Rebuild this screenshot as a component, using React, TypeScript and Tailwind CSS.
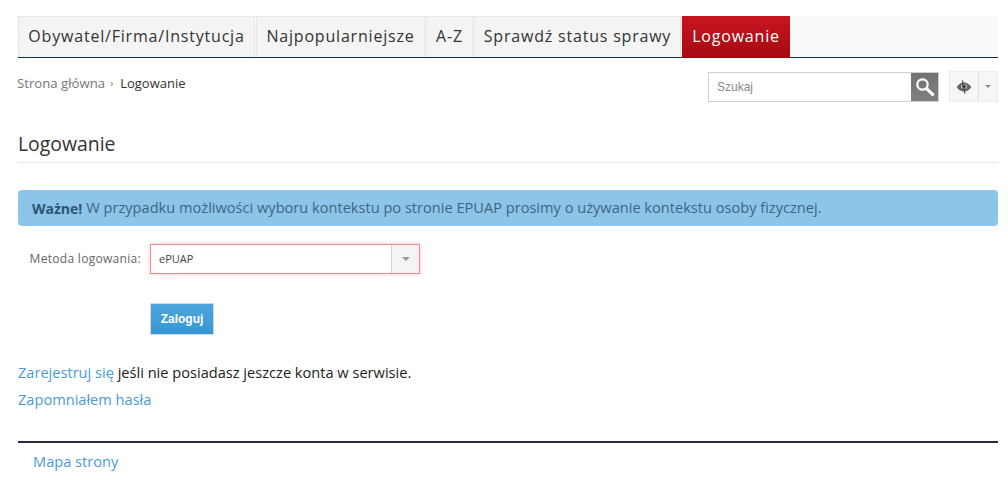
const tabs = [
  { label: "Obywatel/Firma/Instytucja", width: "w-[237px]" },
  { label: "Najpopularniejsze", width: "w-[169px]" },
  { label: "A-Z", width: "w-[47px]" },
  { label: "Sprawdź status sprawy", width: "w-[207px]" },
];

export default function App() {
  return (
    <div className="min-h-[486px] bg-white pt-4 pr-[10px] pl-[18px] font-['Open_Sans',sans-serif] text-[14.6px] text-[#333]">
      <nav className="flex h-[42px] items-stretch border-b border-[#16304f] bg-[#f9f9f9]">
        {tabs.map((tab) => (
          <a
            key={tab.label}
            className={`${tab.width} mr-px flex items-center justify-center border-x border-t border-[#e6e6e6] bg-[#f4f4f4] pb-[2px] text-[16px] tracking-[0.8px] whitespace-nowrap text-[#333]`}
          >
            {tab.label}
          </a>
        ))}
        <a className="-mb-px flex w-[108px] items-center justify-center bg-gradient-to-b from-[#c8141f] to-[#a50b12] pb-[2px] text-[16px] tracking-[0.8px] text-white">
          Logowanie
        </a>
      </nav>

      <div className="flex items-start justify-between pt-[13px]">
        <div className="-ml-px flex items-center pt-[2px] text-[13.2px] leading-[20px]">
          <span className="text-[#777]">Strona główna</span>
          <span className="mr-[7px] ml-[5px] text-[10px] text-[#777]">›</span>
          <span className="text-[13px] text-[#333]">Logowanie</span>
        </div>
        <div className="flex items-start">
          <div className="mt-px flex h-[30px] w-[231px] border border-[#cfcfcf] bg-white">
            <span className="flex flex-1 items-center pl-2 font-['Liberation_Sans',sans-serif] text-[12px] text-[#8a8a8a]">Szukaj</span>
            <span className="flex w-[27px] items-center justify-center bg-gradient-to-b from-[#727272] to-[#808080]">
              <svg width="20" height="20" viewBox="0 0 20 20" fill="none" stroke="white">
                <circle cx="7.5" cy="7.5" r="5.2" strokeWidth="2.2" />
                <path d="M11.6 11.6L17.6 17.4" strokeWidth="3.2" strokeLinecap="round" />
              </svg>
            </span>
          </div>
          <div className="ml-[10px] flex h-[31px] w-[49px] border border-[#ececec] bg-[#f6f6f6]">
            <span className="flex w-[29px] items-center justify-center border-r border-[#e4e4e4]">
              <svg width="16" height="14" viewBox="0 0 16 14">
                <path d="M0.5 7C3 3.6 5.4 2.4 8 2.4S13 3.6 15.5 7C13 10.4 10.6 11.6 8 11.6S3 10.4 0.5 7Z" fill="#666" />
                <ellipse cx="8" cy="6.5" rx="3" ry="2.2" fill="#bbb" />
                <circle cx="8" cy="6.5" r="1.7" fill="#333" />
                <path d="M6.4 0.5L8.8 13.5" stroke="#444" strokeWidth="1.2" />
              </svg>
            </span>
            <span className="flex flex-1 items-center justify-center">
              <span className="h-0 w-0 border-x-[3px] border-t-[3px] border-x-transparent border-t-[#888]" />
            </span>
          </div>
        </div>
      </div>

      <h1 className="mt-[28px] border-b border-[#e5e5e5] pb-[4px] text-[19.4px] leading-[28px] text-[#333]">Logowanie</h1>

      <div className="mt-[27px] flex h-[36px] items-center rounded-[4px] bg-[#8cc5e8] pl-[14px] text-[#3f6582]">
        <strong className="mr-1 text-[14px] font-bold text-[#2b5673]">Ważne!</strong>
        W przypadku możliwości wyboru kontekstu po stronie EPUAP prosimy o używanie kontekstu osoby fizycznej.
      </div>

      <div className="mt-[18px] flex items-center">
        <label className="w-[132px] pr-[9px] text-right text-[12px] tracking-[0.3px] text-[#666]">Metoda logowania:</label>
        <div className="flex h-[30px] w-[270px] border border-[#f08a90] bg-white shadow-[0_0_4px_rgba(240,120,130,0.45)]">
          <span className="flex flex-1 items-center pl-2 text-[11px] text-[#444]">ePUAP</span>
          <span className="flex w-[28px] items-center justify-center border-l border-[#d4d4d4] bg-[#f4f4f4]">
            <span className="h-0 w-0 border-x-[4px] border-t-[4px] border-x-transparent border-t-[#999]" />
          </span>
        </div>
      </div>

      <div className="mt-[29px] pl-[132px]">
        <button className="h-[32px] w-[64px] border border-[#cfd8de] bg-gradient-to-b from-[#4ea6dc] to-[#3697d2] font-['Liberation_Sans',sans-serif] text-[12px] font-bold text-white">
          Zaloguj
        </button>
      </div>

      <p className="mt-[24px] leading-[27px] text-[#222]">
        <a className="text-[#4a9bd8]">Zarejestruj się</a> jeśli nie posiadasz jeszcze konta w serwisie.
      </p>
      <p className="leading-[27px]">
        <a className="text-[#4a9bd8]">Zapomniałem hasła</a>
      </p>

      <footer className="mt-[28px] border-t-2 border-[#2b2b3a] pt-[8px] pl-[15px] leading-[20px]">
        <a className="text-[#4a9bd8]">Mapa strony</a>
      </footer>
    </div>
  );
}
